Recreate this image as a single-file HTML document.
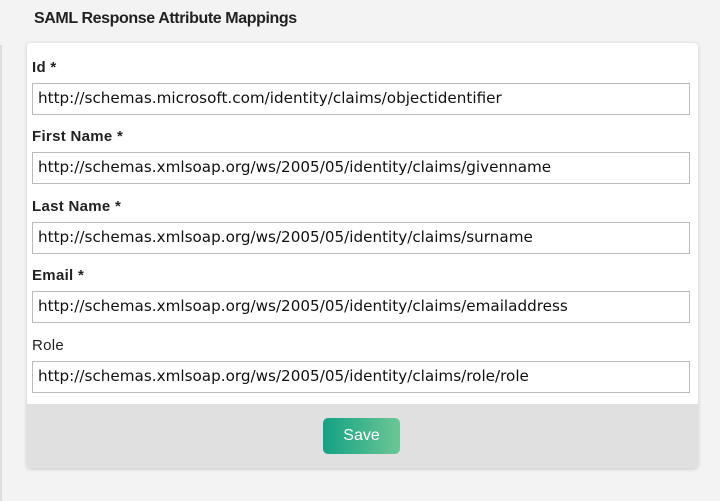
<!DOCTYPE html>
<html><head><style>
body{margin:0;width:720px;height:501px;background:#f3f3f3;font-family:"Liberation Sans",sans-serif;position:relative;overflow:hidden}
.lb{position:absolute;left:0;top:45px;width:2px;height:456px;background:#ddd}
h1{position:absolute;left:34px;top:10px;margin:0;font-size:16px;font-weight:bold;color:#222;letter-spacing:-0.4px}
.card{position:absolute;left:27px;top:43px;width:671px;height:425px;background:#fff;border-radius:4px;box-shadow:0 1px 4px rgba(0,0,0,.18);overflow:hidden}
.f{position:absolute;left:5px;width:658px}
.f label{display:block;font-size:15px;font-weight:bold;color:#222;height:24px;line-height:18px;letter-spacing:0.3px}
.f label.n{font-weight:normal}
.f div{height:30px;border:1px solid #bbb;font-family:"DejaVu Sans",sans-serif;font-size:15.2px;line-height:29px;padding-left:5px;color:#111;white-space:nowrap}
.foot{position:absolute;left:0;top:361px;width:671px;height:64px;background:#e0e0e0}
.btn{position:absolute;left:296px;top:14px;width:77px;height:36px;border-radius:5px;background:linear-gradient(90deg,#14a184,#6cc795);color:#fff;font-size:16px;text-align:center;line-height:36px}
</style></head><body>
<div class="lb"></div>
<h1>SAML Response Attribute Mappings</h1>
<div class="card">
<div class="f" style="top:16px"><label>Id *</label><div>http://schemas.microsoft.com/identity/claims/objectidentifier</div></div>
<div class="f" style="top:85px"><label>First Name *</label><div>http://schemas.xmlsoap.org/ws/2005/05/identity/claims/givenname</div></div>
<div class="f" style="top:155px"><label>Last Name *</label><div>http://schemas.xmlsoap.org/ws/2005/05/identity/claims/surname</div></div>
<div class="f" style="top:224px"><label>Email *</label><div>http://schemas.xmlsoap.org/ws/2005/05/identity/claims/emailaddress</div></div>
<div class="f" style="top:294px"><label class="n">Role</label><div>http://schemas.xmlsoap.org/ws/2005/05/identity/claims/role/role</div></div>
<div class="foot"><div class="btn">Save</div></div>
</div>
</body></html>
